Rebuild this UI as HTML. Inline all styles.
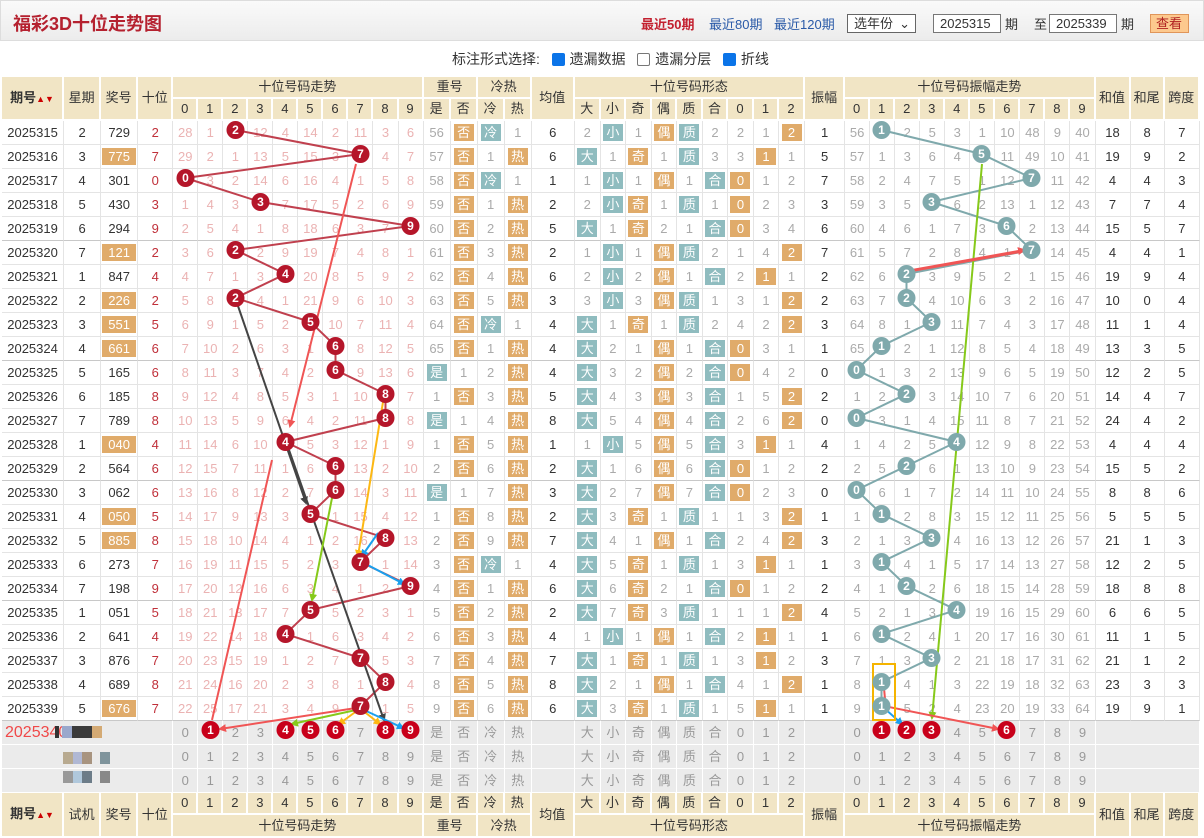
<!DOCTYPE html>
<html><head><meta charset="utf-8">
<style>
*{margin:0;padding:0;box-sizing:border-box}
body{width:1204px;height:835px;overflow:hidden;background:#fff;font-family:"Liberation Sans","Noto Sans CJK SC",sans-serif;font-size:13px;color:#333;position:relative}
.top{position:absolute;left:0;top:0;width:1204px;height:41px;background:linear-gradient(#fafafa,#ececec);border:1px solid #ddd}
.title{position:absolute;left:12px;top:9px;font-size:18px;font-weight:bold;color:#b5212f}
.ctl{position:absolute;top:13px;font-size:13px}
.inp{position:absolute;top:13px;height:19px;border:1px solid #777;background:#fff;font-size:13px;padding-left:6px;line-height:17px}
.opt{position:absolute;top:49px;left:452px;font-size:14px}
.cb{display:inline-block;width:13px;height:13px;border-radius:2px;vertical-align:-2px;margin:0 5px 0 0}
.cb.on{background:#0b74e8}
.cb.off{border:1px solid #777;background:#fff}
table{position:absolute;left:2px;top:77px;border-collapse:separate;border-spacing:0;table-layout:fixed;width:1198px}
td{border-right:1px solid #e4e4e4;border-bottom:1px solid #e4e4e4;text-align:center;padding:0;line-height:20px;white-space:nowrap;overflow:hidden}
tr.h td{background:#f1e5c5;border-color:#fff;border-width:0 2px 2px 0;font-size:13px}
tr.h1{height:22px}tr.h2{height:20px}
tr.d{height:24px}
tr.d td:nth-child(n+5):nth-child(-n+14){color:#ebb3b3}
tr.d td:nth-child(n+15):nth-child(-n+18){color:#aaa}
tr.d td:nth-child(n+20):nth-child(-n+28){color:#aaa}
tr.d td:nth-child(n+30):nth-child(-n+39){color:#aaa}
tr.d td:nth-child(4){color:#c0303a}
tr.s td{border-bottom-color:#c8c8c8}
i{font-style:normal;display:inline-block;width:20px;height:17px;line-height:17px;color:#fff!important}
i.o{background:#e0ab6a}i.t{background:#8fbcbf}
i.w{width:34px}
tr.p{height:24px}
tr.p td{background:#ebebeb;border-color:#fff;color:#999}
tr.f1{height:22px}tr.f2{height:23px}
tr.f1 td,tr.f2 td{background:#f1e5c5;border-color:#fff;border-width:0 2px 2px 0}
svg{position:absolute;left:0;top:0}
.bl{position:absolute;height:12px;width:10px}
</style></head><body>
<div class="top">
<div class="title">福彩3D十位走势图</div>
<span class="ctl" style="left:640px;color:#c3202f;font-weight:bold">最近50期</span>
<span class="ctl" style="left:708px;color:#2a5aa8">最近80期</span>
<span class="ctl" style="left:773px;color:#2a5aa8">最近120期</span>
<div class="inp" style="left:846px;width:69px;border-color:#666">选年份 <span style="position:absolute;right:5px;top:0">⌄</span></div>
<div class="inp" style="left:932px;width:68px">2025315</div>
<span class="ctl" style="left:1004px">期</span>
<span class="ctl" style="left:1033px">至</span>
<div class="inp" style="left:1048px;width:68px">2025339</div>
<span class="ctl" style="left:1120px">期</span>
<div class="inp" style="left:1149px;width:39px;background:#fdc98e;border-color:#e0955a;color:#b02020;padding-left:5px">查看</div>
</div>
<div class="opt">标注形式选择: &nbsp; <span class="cb on"></span>遗漏数据 &nbsp; <span class="cb off"></span>遗漏分层 &nbsp; <span class="cb on"></span>折线</div>
<table>
<colgroup><col style="width:62px"><col style="width:37px"><col style="width:37px"><col style="width:35px">
<col style="width:25px"><col style="width:25px"><col style="width:25px"><col style="width:25px"><col style="width:25px"><col style="width:25px"><col style="width:25px"><col style="width:25px"><col style="width:25px"><col style="width:25px">
<col style="width:27px"><col style="width:27px"><col style="width:27px"><col style="width:27px"><col style="width:43px">
<col style="width:26px"><col style="width:25px"><col style="width:26px"><col style="width:25px"><col style="width:26px"><col style="width:25px"><col style="width:26px"><col style="width:25px"><col style="width:26px">
<col style="width:40px">
<col style="width:25px"><col style="width:25px"><col style="width:25px"><col style="width:25px"><col style="width:25px"><col style="width:25px"><col style="width:25px"><col style="width:25px"><col style="width:25px"><col style="width:25px">
<col style="width:35px"><col style="width:34px"><col style="width:35px"></colgroup>
<tr class="h h1"><td rowspan="2"><b>期号</b><span style="color:#c00;font-size:9px">▲▼</span></td><td rowspan="2">星期</td><td rowspan="2">奖号</td><td rowspan="2">十位</td><td colspan="10">十位号码走势</td><td colspan="2">重号</td><td colspan="2">冷热</td><td rowspan="2">均值</td><td colspan="9">十位号码形态</td><td rowspan="2">振幅</td><td colspan="10">十位号码振幅走势</td><td rowspan="2">和值</td><td rowspan="2">和尾</td><td rowspan="2">跨度</td></tr>
<tr class="h h2"><td>0</td><td>1</td><td>2</td><td>3</td><td>4</td><td>5</td><td>6</td><td>7</td><td>8</td><td>9</td><td>是</td><td>否</td><td>冷</td><td>热</td><td>大</td><td>小</td><td>奇</td><td>偶</td><td>质</td><td>合</td><td>0</td><td>1</td><td>2</td><td>0</td><td>1</td><td>2</td><td>3</td><td>4</td><td>5</td><td>6</td><td>7</td><td>8</td><td>9</td></tr>
<tr class="d"><td>2025315</td><td>2</td><td>729</td><td>2</td><td>28</td><td>1</td><td></td><td>12</td><td>4</td><td>14</td><td>2</td><td>11</td><td>3</td><td>6</td><td>56</td><td><i class="o">否</i></td><td><i class="t">冷</i></td><td>1</td><td>6</td><td>2</td><td><i class="t">小</i></td><td>1</td><td><i class="o">偶</i></td><td><i class="t">质</i></td><td>2</td><td>2</td><td>1</td><td><i class="o">2</i></td><td>1</td><td>56</td><td></td><td>2</td><td>5</td><td>3</td><td>1</td><td>10</td><td>48</td><td>9</td><td>40</td><td>18</td><td>8</td><td>7</td></tr>
<tr class="d"><td>2025316</td><td>3</td><td><i class="o w">775</i></td><td>7</td><td>29</td><td>2</td><td>1</td><td>13</td><td>5</td><td>15</td><td>3</td><td></td><td>4</td><td>7</td><td>57</td><td><i class="o">否</i></td><td>1</td><td><i class="o">热</i></td><td>6</td><td><i class="t">大</i></td><td>1</td><td><i class="o">奇</i></td><td>1</td><td><i class="t">质</i></td><td>3</td><td>3</td><td><i class="o">1</i></td><td>1</td><td>5</td><td>57</td><td>1</td><td>3</td><td>6</td><td>4</td><td></td><td>11</td><td>49</td><td>10</td><td>41</td><td>19</td><td>9</td><td>2</td></tr>
<tr class="d"><td>2025317</td><td>4</td><td>301</td><td>0</td><td></td><td>3</td><td>2</td><td>14</td><td>6</td><td>16</td><td>4</td><td>1</td><td>5</td><td>8</td><td>58</td><td><i class="o">否</i></td><td><i class="t">冷</i></td><td>1</td><td>1</td><td>1</td><td><i class="t">小</i></td><td>1</td><td><i class="o">偶</i></td><td>1</td><td><i class="t">合</i></td><td><i class="o">0</i></td><td>1</td><td>2</td><td>7</td><td>58</td><td>2</td><td>4</td><td>7</td><td>5</td><td>1</td><td>12</td><td></td><td>11</td><td>42</td><td>4</td><td>4</td><td>3</td></tr>
<tr class="d"><td>2025318</td><td>5</td><td>430</td><td>3</td><td>1</td><td>4</td><td>3</td><td></td><td>7</td><td>17</td><td>5</td><td>2</td><td>6</td><td>9</td><td>59</td><td><i class="o">否</i></td><td>1</td><td><i class="o">热</i></td><td>2</td><td>2</td><td><i class="t">小</i></td><td><i class="o">奇</i></td><td>1</td><td><i class="t">质</i></td><td>1</td><td><i class="o">0</i></td><td>2</td><td>3</td><td>3</td><td>59</td><td>3</td><td>5</td><td></td><td>6</td><td>2</td><td>13</td><td>1</td><td>12</td><td>43</td><td>7</td><td>7</td><td>4</td></tr>
<tr class="d s"><td>2025319</td><td>6</td><td>294</td><td>9</td><td>2</td><td>5</td><td>4</td><td>1</td><td>8</td><td>18</td><td>6</td><td>3</td><td>7</td><td></td><td>60</td><td><i class="o">否</i></td><td>2</td><td><i class="o">热</i></td><td>5</td><td><i class="t">大</i></td><td>1</td><td><i class="o">奇</i></td><td>2</td><td>1</td><td><i class="t">合</i></td><td><i class="o">0</i></td><td>3</td><td>4</td><td>6</td><td>60</td><td>4</td><td>6</td><td>1</td><td>7</td><td>3</td><td></td><td>2</td><td>13</td><td>44</td><td>15</td><td>5</td><td>7</td></tr>
<tr class="d"><td>2025320</td><td>7</td><td><i class="o w">121</i></td><td>2</td><td>3</td><td>6</td><td></td><td>2</td><td>9</td><td>19</td><td>7</td><td>4</td><td>8</td><td>1</td><td>61</td><td><i class="o">否</i></td><td>3</td><td><i class="o">热</i></td><td>2</td><td>1</td><td><i class="t">小</i></td><td>1</td><td><i class="o">偶</i></td><td><i class="t">质</i></td><td>2</td><td>1</td><td>4</td><td><i class="o">2</i></td><td>7</td><td>61</td><td>5</td><td>7</td><td>2</td><td>8</td><td>4</td><td>1</td><td></td><td>14</td><td>45</td><td>4</td><td>4</td><td>1</td></tr>
<tr class="d"><td>2025321</td><td>1</td><td>847</td><td>4</td><td>4</td><td>7</td><td>1</td><td>3</td><td></td><td>20</td><td>8</td><td>5</td><td>9</td><td>2</td><td>62</td><td><i class="o">否</i></td><td>4</td><td><i class="o">热</i></td><td>6</td><td>2</td><td><i class="t">小</i></td><td>2</td><td><i class="o">偶</i></td><td>1</td><td><i class="t">合</i></td><td>2</td><td><i class="o">1</i></td><td>1</td><td>2</td><td>62</td><td>6</td><td></td><td>3</td><td>9</td><td>5</td><td>2</td><td>1</td><td>15</td><td>46</td><td>19</td><td>9</td><td>4</td></tr>
<tr class="d"><td>2025322</td><td>2</td><td><i class="o w">226</i></td><td>2</td><td>5</td><td>8</td><td></td><td>4</td><td>1</td><td>21</td><td>9</td><td>6</td><td>10</td><td>3</td><td>63</td><td><i class="o">否</i></td><td>5</td><td><i class="o">热</i></td><td>3</td><td>3</td><td><i class="t">小</i></td><td>3</td><td><i class="o">偶</i></td><td><i class="t">质</i></td><td>1</td><td>3</td><td>1</td><td><i class="o">2</i></td><td>2</td><td>63</td><td>7</td><td></td><td>4</td><td>10</td><td>6</td><td>3</td><td>2</td><td>16</td><td>47</td><td>10</td><td>0</td><td>4</td></tr>
<tr class="d"><td>2025323</td><td>3</td><td><i class="o w">551</i></td><td>5</td><td>6</td><td>9</td><td>1</td><td>5</td><td>2</td><td></td><td>10</td><td>7</td><td>11</td><td>4</td><td>64</td><td><i class="o">否</i></td><td><i class="t">冷</i></td><td>1</td><td>4</td><td><i class="t">大</i></td><td>1</td><td><i class="o">奇</i></td><td>1</td><td><i class="t">质</i></td><td>2</td><td>4</td><td>2</td><td><i class="o">2</i></td><td>3</td><td>64</td><td>8</td><td>1</td><td></td><td>11</td><td>7</td><td>4</td><td>3</td><td>17</td><td>48</td><td>11</td><td>1</td><td>4</td></tr>
<tr class="d s"><td>2025324</td><td>4</td><td><i class="o w">661</i></td><td>6</td><td>7</td><td>10</td><td>2</td><td>6</td><td>3</td><td>1</td><td></td><td>8</td><td>12</td><td>5</td><td>65</td><td><i class="o">否</i></td><td>1</td><td><i class="o">热</i></td><td>4</td><td><i class="t">大</i></td><td>2</td><td>1</td><td><i class="o">偶</i></td><td>1</td><td><i class="t">合</i></td><td><i class="o">0</i></td><td>3</td><td>1</td><td>1</td><td>65</td><td></td><td>2</td><td>1</td><td>12</td><td>8</td><td>5</td><td>4</td><td>18</td><td>49</td><td>13</td><td>3</td><td>5</td></tr>
<tr class="d"><td>2025325</td><td>5</td><td>165</td><td>6</td><td>8</td><td>11</td><td>3</td><td>7</td><td>4</td><td>2</td><td></td><td>9</td><td>13</td><td>6</td><td><i class="t">是</i></td><td>1</td><td>2</td><td><i class="o">热</i></td><td>4</td><td><i class="t">大</i></td><td>3</td><td>2</td><td><i class="o">偶</i></td><td>2</td><td><i class="t">合</i></td><td><i class="o">0</i></td><td>4</td><td>2</td><td>0</td><td></td><td>1</td><td>3</td><td>2</td><td>13</td><td>9</td><td>6</td><td>5</td><td>19</td><td>50</td><td>12</td><td>2</td><td>5</td></tr>
<tr class="d"><td>2025326</td><td>6</td><td>185</td><td>8</td><td>9</td><td>12</td><td>4</td><td>8</td><td>5</td><td>3</td><td>1</td><td>10</td><td></td><td>7</td><td>1</td><td><i class="o">否</i></td><td>3</td><td><i class="o">热</i></td><td>5</td><td><i class="t">大</i></td><td>4</td><td>3</td><td><i class="o">偶</i></td><td>3</td><td><i class="t">合</i></td><td>1</td><td>5</td><td><i class="o">2</i></td><td>2</td><td>1</td><td>2</td><td></td><td>3</td><td>14</td><td>10</td><td>7</td><td>6</td><td>20</td><td>51</td><td>14</td><td>4</td><td>7</td></tr>
<tr class="d"><td>2025327</td><td>7</td><td>789</td><td>8</td><td>10</td><td>13</td><td>5</td><td>9</td><td>6</td><td>4</td><td>2</td><td>11</td><td></td><td>8</td><td><i class="t">是</i></td><td>1</td><td>4</td><td><i class="o">热</i></td><td>8</td><td><i class="t">大</i></td><td>5</td><td>4</td><td><i class="o">偶</i></td><td>4</td><td><i class="t">合</i></td><td>2</td><td>6</td><td><i class="o">2</i></td><td>0</td><td></td><td>3</td><td>1</td><td>4</td><td>15</td><td>11</td><td>8</td><td>7</td><td>21</td><td>52</td><td>24</td><td>4</td><td>2</td></tr>
<tr class="d"><td>2025328</td><td>1</td><td><i class="o w">040</i></td><td>4</td><td>11</td><td>14</td><td>6</td><td>10</td><td></td><td>5</td><td>3</td><td>12</td><td>1</td><td>9</td><td>1</td><td><i class="o">否</i></td><td>5</td><td><i class="o">热</i></td><td>1</td><td>1</td><td><i class="t">小</i></td><td>5</td><td><i class="o">偶</i></td><td>5</td><td><i class="t">合</i></td><td>3</td><td><i class="o">1</i></td><td>1</td><td>4</td><td>1</td><td>4</td><td>2</td><td>5</td><td></td><td>12</td><td>9</td><td>8</td><td>22</td><td>53</td><td>4</td><td>4</td><td>4</td></tr>
<tr class="d s"><td>2025329</td><td>2</td><td>564</td><td>6</td><td>12</td><td>15</td><td>7</td><td>11</td><td>1</td><td>6</td><td></td><td>13</td><td>2</td><td>10</td><td>2</td><td><i class="o">否</i></td><td>6</td><td><i class="o">热</i></td><td>2</td><td><i class="t">大</i></td><td>1</td><td>6</td><td><i class="o">偶</i></td><td>6</td><td><i class="t">合</i></td><td><i class="o">0</i></td><td>1</td><td>2</td><td>2</td><td>2</td><td>5</td><td></td><td>6</td><td>1</td><td>13</td><td>10</td><td>9</td><td>23</td><td>54</td><td>15</td><td>5</td><td>2</td></tr>
<tr class="d"><td>2025330</td><td>3</td><td>062</td><td>6</td><td>13</td><td>16</td><td>8</td><td>12</td><td>2</td><td>7</td><td></td><td>14</td><td>3</td><td>11</td><td><i class="t">是</i></td><td>1</td><td>7</td><td><i class="o">热</i></td><td>3</td><td><i class="t">大</i></td><td>2</td><td>7</td><td><i class="o">偶</i></td><td>7</td><td><i class="t">合</i></td><td><i class="o">0</i></td><td>2</td><td>3</td><td>0</td><td></td><td>6</td><td>1</td><td>7</td><td>2</td><td>14</td><td>11</td><td>10</td><td>24</td><td>55</td><td>8</td><td>8</td><td>6</td></tr>
<tr class="d"><td>2025331</td><td>4</td><td><i class="o w">050</i></td><td>5</td><td>14</td><td>17</td><td>9</td><td>13</td><td>3</td><td></td><td>1</td><td>15</td><td>4</td><td>12</td><td>1</td><td><i class="o">否</i></td><td>8</td><td><i class="o">热</i></td><td>2</td><td><i class="t">大</i></td><td>3</td><td><i class="o">奇</i></td><td>1</td><td><i class="t">质</i></td><td>1</td><td>1</td><td>3</td><td><i class="o">2</i></td><td>1</td><td>1</td><td></td><td>2</td><td>8</td><td>3</td><td>15</td><td>12</td><td>11</td><td>25</td><td>56</td><td>5</td><td>5</td><td>5</td></tr>
<tr class="d"><td>2025332</td><td>5</td><td><i class="o w">885</i></td><td>8</td><td>15</td><td>18</td><td>10</td><td>14</td><td>4</td><td>1</td><td>2</td><td>16</td><td></td><td>13</td><td>2</td><td><i class="o">否</i></td><td>9</td><td><i class="o">热</i></td><td>7</td><td><i class="t">大</i></td><td>4</td><td>1</td><td><i class="o">偶</i></td><td>1</td><td><i class="t">合</i></td><td>2</td><td>4</td><td><i class="o">2</i></td><td>3</td><td>2</td><td>1</td><td>3</td><td></td><td>4</td><td>16</td><td>13</td><td>12</td><td>26</td><td>57</td><td>21</td><td>1</td><td>3</td></tr>
<tr class="d"><td>2025333</td><td>6</td><td>273</td><td>7</td><td>16</td><td>19</td><td>11</td><td>15</td><td>5</td><td>2</td><td>3</td><td></td><td>1</td><td>14</td><td>3</td><td><i class="o">否</i></td><td><i class="t">冷</i></td><td>1</td><td>4</td><td><i class="t">大</i></td><td>5</td><td><i class="o">奇</i></td><td>1</td><td><i class="t">质</i></td><td>1</td><td>3</td><td><i class="o">1</i></td><td>1</td><td>1</td><td>3</td><td></td><td>4</td><td>1</td><td>5</td><td>17</td><td>14</td><td>13</td><td>27</td><td>58</td><td>12</td><td>2</td><td>5</td></tr>
<tr class="d s"><td>2025334</td><td>7</td><td>198</td><td>9</td><td>17</td><td>20</td><td>12</td><td>16</td><td>6</td><td>3</td><td>4</td><td>1</td><td>2</td><td></td><td>4</td><td><i class="o">否</i></td><td>1</td><td><i class="o">热</i></td><td>6</td><td><i class="t">大</i></td><td>6</td><td><i class="o">奇</i></td><td>2</td><td>1</td><td><i class="t">合</i></td><td><i class="o">0</i></td><td>1</td><td>2</td><td>2</td><td>4</td><td>1</td><td></td><td>2</td><td>6</td><td>18</td><td>15</td><td>14</td><td>28</td><td>59</td><td>18</td><td>8</td><td>8</td></tr>
<tr class="d"><td>2025335</td><td>1</td><td>051</td><td>5</td><td>18</td><td>21</td><td>13</td><td>17</td><td>7</td><td></td><td>5</td><td>2</td><td>3</td><td>1</td><td>5</td><td><i class="o">否</i></td><td>2</td><td><i class="o">热</i></td><td>2</td><td><i class="t">大</i></td><td>7</td><td><i class="o">奇</i></td><td>3</td><td><i class="t">质</i></td><td>1</td><td>1</td><td>1</td><td><i class="o">2</i></td><td>4</td><td>5</td><td>2</td><td>1</td><td>3</td><td></td><td>19</td><td>16</td><td>15</td><td>29</td><td>60</td><td>6</td><td>6</td><td>5</td></tr>
<tr class="d"><td>2025336</td><td>2</td><td>641</td><td>4</td><td>19</td><td>22</td><td>14</td><td>18</td><td></td><td>1</td><td>6</td><td>3</td><td>4</td><td>2</td><td>6</td><td><i class="o">否</i></td><td>3</td><td><i class="o">热</i></td><td>4</td><td>1</td><td><i class="t">小</i></td><td>1</td><td><i class="o">偶</i></td><td>1</td><td><i class="t">合</i></td><td>2</td><td><i class="o">1</i></td><td>1</td><td>1</td><td>6</td><td></td><td>2</td><td>4</td><td>1</td><td>20</td><td>17</td><td>16</td><td>30</td><td>61</td><td>11</td><td>1</td><td>5</td></tr>
<tr class="d"><td>2025337</td><td>3</td><td>876</td><td>7</td><td>20</td><td>23</td><td>15</td><td>19</td><td>1</td><td>2</td><td>7</td><td></td><td>5</td><td>3</td><td>7</td><td><i class="o">否</i></td><td>4</td><td><i class="o">热</i></td><td>7</td><td><i class="t">大</i></td><td>1</td><td><i class="o">奇</i></td><td>1</td><td><i class="t">质</i></td><td>1</td><td>3</td><td><i class="o">1</i></td><td>2</td><td>3</td><td>7</td><td>1</td><td>3</td><td></td><td>2</td><td>21</td><td>18</td><td>17</td><td>31</td><td>62</td><td>21</td><td>1</td><td>2</td></tr>
<tr class="d"><td>2025338</td><td>4</td><td>689</td><td>8</td><td>21</td><td>24</td><td>16</td><td>20</td><td>2</td><td>3</td><td>8</td><td>1</td><td></td><td>4</td><td>8</td><td><i class="o">否</i></td><td>5</td><td><i class="o">热</i></td><td>8</td><td><i class="t">大</i></td><td>2</td><td>1</td><td><i class="o">偶</i></td><td>1</td><td><i class="t">合</i></td><td>4</td><td>1</td><td><i class="o">2</i></td><td>1</td><td>8</td><td></td><td>4</td><td>1</td><td>3</td><td>22</td><td>19</td><td>18</td><td>32</td><td>63</td><td>23</td><td>3</td><td>3</td></tr>
<tr class="d s"><td>2025339</td><td>5</td><td><i class="o w">676</i></td><td>7</td><td>22</td><td>25</td><td>17</td><td>21</td><td>3</td><td>4</td><td>9</td><td></td><td>1</td><td>5</td><td>9</td><td><i class="o">否</i></td><td>6</td><td><i class="o">热</i></td><td>6</td><td><i class="t">大</i></td><td>3</td><td><i class="o">奇</i></td><td>1</td><td><i class="t">质</i></td><td>1</td><td>5</td><td><i class="o">1</i></td><td>1</td><td>1</td><td>9</td><td></td><td>5</td><td>2</td><td>4</td><td>23</td><td>20</td><td>19</td><td>33</td><td>64</td><td>19</td><td>9</td><td>1</td></tr>
<tr class="p"><td colspan="4" style="text-align:left;color:#f04848;font-size:16px;padding-left:3px">2025340</td><td>0</td><td></td><td>2</td><td>3</td><td></td><td></td><td></td><td>7</td><td></td><td></td><td>是</td><td>否</td><td>冷</td><td>热</td><td></td><td>大</td><td>小</td><td>奇</td><td>偶</td><td>质</td><td>合</td><td>0</td><td>1</td><td>2</td><td></td><td>0</td><td></td><td></td><td></td><td>4</td><td>5</td><td></td><td>7</td><td>8</td><td>9</td><td colspan="3"></td></tr>
<tr class="p"><td colspan="4"></td><td>0</td><td>1</td><td>2</td><td>3</td><td>4</td><td>5</td><td>6</td><td>7</td><td>8</td><td>9</td><td>是</td><td>否</td><td>冷</td><td>热</td><td></td><td>大</td><td>小</td><td>奇</td><td>偶</td><td>质</td><td>合</td><td>0</td><td>1</td><td>2</td><td></td><td>0</td><td>1</td><td>2</td><td>3</td><td>4</td><td>5</td><td>6</td><td>7</td><td>8</td><td>9</td><td colspan="3"></td></tr>
<tr class="p"><td colspan="4"></td><td>0</td><td>1</td><td>2</td><td>3</td><td>4</td><td>5</td><td>6</td><td>7</td><td>8</td><td>9</td><td>是</td><td>否</td><td>冷</td><td>热</td><td></td><td>大</td><td>小</td><td>奇</td><td>偶</td><td>质</td><td>合</td><td>0</td><td>1</td><td>2</td><td></td><td>0</td><td>1</td><td>2</td><td>3</td><td>4</td><td>5</td><td>6</td><td>7</td><td>8</td><td>9</td><td colspan="3"></td></tr>
<tr class="f1"><td rowspan="2"><b>期号</b><span style="color:#c00;font-size:9px">▲▼</span></td><td rowspan="2">试机</td><td rowspan="2">奖号</td><td rowspan="2">十位</td><td>0</td><td>1</td><td>2</td><td>3</td><td>4</td><td>5</td><td>6</td><td>7</td><td>8</td><td>9</td><td>是</td><td>否</td><td>冷</td><td>热</td><td rowspan="2">均值</td><td>大</td><td>小</td><td>奇</td><td>偶</td><td>质</td><td>合</td><td>0</td><td>1</td><td>2</td><td rowspan="2">振幅</td><td>0</td><td>1</td><td>2</td><td>3</td><td>4</td><td>5</td><td>6</td><td>7</td><td>8</td><td>9</td><td rowspan="2">和值</td><td rowspan="2">和尾</td><td rowspan="2">跨度</td></tr>
<tr class="f2"><td colspan="10">十位号码走势</td><td colspan="2">重号</td><td colspan="2">冷热</td><td colspan="9">十位号码形态</td><td colspan="10">十位号码振幅走势</td></tr>
</table>
<div class="bl" style="left:55px;top:726px;background:#333;width:4px"></div><div class="bl" style="left:62px;top:726px;background:#9aa8cc"></div><div class="bl" style="left:72px;top:726px;background:#3a3a3a;width:20px"></div><div class="bl" style="left:92px;top:726px;background:#d4aa74"></div>
<div class="bl" style="left:63px;top:752px;background:#b8aa90"></div><div class="bl" style="left:73px;top:752px;background:#b0b8d4"></div><div class="bl" style="left:82px;top:752px;background:#a89480"></div><div class="bl" style="left:100px;top:752px;background:#7f949c"></div>
<div class="bl" style="left:63px;top:771px;background:#999"></div><div class="bl" style="left:73px;top:771px;background:#b0c8dc"></div><div class="bl" style="left:82px;top:771px;background:#6c7c88"></div><div class="bl" style="left:100px;top:771px;background:#888"></div>
<svg width="1204" height="835" viewBox="0 0 1204 835">
<defs>
<marker id="ar" markerWidth="8" markerHeight="8" refX="6" refY="4" orient="auto" markerUnits="userSpaceOnUse"><path d="M0,0 L8,4 L0,8 z" fill="#f05555"/></marker>
<marker id="ag" markerWidth="8" markerHeight="8" refX="6" refY="4" orient="auto" markerUnits="userSpaceOnUse"><path d="M0,0 L8,4 L0,8 z" fill="#86c91a"/></marker>
<marker id="ay" markerWidth="8" markerHeight="8" refX="6" refY="4" orient="auto" markerUnits="userSpaceOnUse"><path d="M0,0 L8,4 L0,8 z" fill="#fdb813"/></marker>
<marker id="ab" markerWidth="8" markerHeight="8" refX="6" refY="4" orient="auto" markerUnits="userSpaceOnUse"><path d="M0,0 L8,4 L0,8 z" fill="#1aa0ee"/></marker>
<marker id="ak" markerWidth="8" markerHeight="8" refX="6" refY="4" orient="auto" markerUnits="userSpaceOnUse"><path d="M0,0 L8,4 L0,8 z" fill="#444"/></marker>
</defs>
<polyline fill="none" stroke="#c0404e" stroke-width="2" points="235.5,130 360.5,154 185.5,178 260.5,202 410.5,226 235.5,250 285.5,274 235.5,298 310.5,322 335.5,346 335.5,370 385.5,394 385.5,418 285.5,442 335.5,466 335.5,490 310.5,514 385.5,538 360.5,562 410.5,586 310.5,610 285.5,634 360.5,658 385.5,682 360.5,706"/>
<polyline fill="none" stroke="#7fa9ac" stroke-width="2" points="881.5,130 981.5,154 1031.5,178 931.5,202 1006.5,226 1031.5,250 906.5,274 906.5,298 931.5,322 881.5,346 856.5,370 906.5,394 856.5,418 956.5,442 906.5,466 856.5,490 881.5,514 931.5,538 881.5,562 906.5,586 956.5,610 881.5,634 931.5,658 881.5,682 881.5,706"/>
<g stroke-width="2" fill="none">
<line x1="356" y1="164" x2="290" y2="426" stroke="#f05555" marker-end="url(#ar)"/>
<line x1="238" y1="306" x2="306" y2="503" stroke="#444" marker-end="url(#ak)"/>
<line x1="289" y1="450" x2="384" y2="720" stroke="#444" marker-end="url(#ak)"/>
<line x1="272" y1="460" x2="212" y2="720" stroke="#f05555"/>
<line x1="383" y1="402" x2="358" y2="556" stroke="#fdb813" marker-end="url(#ay)"/>
<line x1="332" y1="498" x2="312" y2="600" stroke="#86c91a" marker-end="url(#ag)"/>
<line x1="378" y1="533" x2="362" y2="556" stroke="#1aa0ee" marker-end="url(#ab)"/>
<line x1="362" y1="562" x2="404" y2="584" stroke="#1aa0ee" marker-end="url(#ab)"/>
<line x1="356" y1="708" x2="220" y2="729" stroke="#f05555" marker-end="url(#ar)"/>
<line x1="356" y1="710" x2="292" y2="724" stroke="#86c91a" marker-end="url(#ag)"/>
<line x1="358" y1="710" x2="339" y2="724" stroke="#fdb813" marker-end="url(#ay)"/>
<line x1="362" y1="710" x2="380" y2="724" stroke="#fdb813" marker-end="url(#ay)"/>
<line x1="364" y1="710" x2="403" y2="728" stroke="#1aa0ee" marker-end="url(#ab)"/>
<line x1="982" y1="164" x2="932" y2="718" stroke="#86c91a" marker-end="url(#ag)"/>
<line x1="912" y1="270" x2="1024" y2="250" stroke="#f05555" marker-end="url(#ar)"/>
<line x1="1020" y1="252" x2="906" y2="272" stroke="#f05555" marker-end="url(#ar)"/>
<line x1="884" y1="688" x2="886" y2="710" stroke="#f05555" marker-end="url(#ar)"/>
<line x1="884" y1="708" x2="902" y2="724" stroke="#1aa0ee" marker-end="url(#ab)"/>
<line x1="884" y1="706" x2="998" y2="729" stroke="#f05555" marker-end="url(#ar)"/>
</g>
<rect x="873" y="664" width="22" height="56" fill="none" stroke="#f5b400" stroke-width="2"/>
<g fill="#b5162a" font-family="Liberation Sans,sans-serif" font-weight="bold" font-size="12" text-anchor="middle">
<g id="hits">
<circle cx="235.5" cy="130" r="9"/><circle cx="360.5" cy="154" r="9"/><circle cx="185.5" cy="178" r="9"/><circle cx="260.5" cy="202" r="9"/><circle cx="410.5" cy="226" r="9"/><circle cx="235.5" cy="250" r="9"/><circle cx="285.5" cy="274" r="9"/><circle cx="235.5" cy="298" r="9"/><circle cx="310.5" cy="322" r="9"/><circle cx="335.5" cy="346" r="9"/><circle cx="335.5" cy="370" r="9"/><circle cx="385.5" cy="394" r="9"/><circle cx="385.5" cy="418" r="9"/><circle cx="285.5" cy="442" r="9"/><circle cx="335.5" cy="466" r="9"/><circle cx="335.5" cy="490" r="9"/><circle cx="310.5" cy="514" r="9"/><circle cx="385.5" cy="538" r="9"/><circle cx="360.5" cy="562" r="9"/><circle cx="410.5" cy="586" r="9"/><circle cx="310.5" cy="610" r="9"/><circle cx="285.5" cy="634" r="9"/><circle cx="360.5" cy="658" r="9"/><circle cx="385.5" cy="682" r="9"/><circle cx="360.5" cy="706" r="9"/>
</g>
<g fill="#c8001a"><circle cx="210.5" cy="730" r="9"/><circle cx="285.5" cy="730" r="9"/><circle cx="310.5" cy="730" r="9"/><circle cx="335.5" cy="730" r="9"/><circle cx="385.5" cy="730" r="9"/><circle cx="410.5" cy="730" r="9"/><circle cx="881.5" cy="730" r="9"/><circle cx="906.5" cy="730" r="9"/><circle cx="931.5" cy="730" r="9"/><circle cx="1006.5" cy="730" r="9"/></g>
<g fill="#7fa9ac"><circle cx="881.5" cy="130" r="9"/><circle cx="981.5" cy="154" r="9"/><circle cx="1031.5" cy="178" r="9"/><circle cx="931.5" cy="202" r="9"/><circle cx="1006.5" cy="226" r="9"/><circle cx="1031.5" cy="250" r="9"/><circle cx="906.5" cy="274" r="9"/><circle cx="906.5" cy="298" r="9"/><circle cx="931.5" cy="322" r="9"/><circle cx="881.5" cy="346" r="9"/><circle cx="856.5" cy="370" r="9"/><circle cx="906.5" cy="394" r="9"/><circle cx="856.5" cy="418" r="9"/><circle cx="956.5" cy="442" r="9"/><circle cx="906.5" cy="466" r="9"/><circle cx="856.5" cy="490" r="9"/><circle cx="881.5" cy="514" r="9"/><circle cx="931.5" cy="538" r="9"/><circle cx="881.5" cy="562" r="9"/><circle cx="906.5" cy="586" r="9"/><circle cx="956.5" cy="610" r="9"/><circle cx="881.5" cy="634" r="9"/><circle cx="931.5" cy="658" r="9"/><circle cx="881.5" cy="682" r="9"/><circle cx="881.5" cy="706" r="9"/></g>
<g fill="#fff">
<text x="235.5" y="134">2</text><text x="360.5" y="158">7</text><text x="185.5" y="182">0</text><text x="260.5" y="206">3</text><text x="410.5" y="230">9</text><text x="235.5" y="254">2</text><text x="285.5" y="278">4</text><text x="235.5" y="302">2</text><text x="310.5" y="326">5</text><text x="335.5" y="350">6</text><text x="335.5" y="374">6</text><text x="385.5" y="398">8</text><text x="385.5" y="422">8</text><text x="285.5" y="446">4</text><text x="335.5" y="470">6</text><text x="335.5" y="494">6</text><text x="310.5" y="518">5</text><text x="385.5" y="542">8</text><text x="360.5" y="566">7</text><text x="410.5" y="590">9</text><text x="310.5" y="614">5</text><text x="285.5" y="638">4</text><text x="360.5" y="662">7</text><text x="385.5" y="686">8</text><text x="360.5" y="710">7</text>
<text x="210.5" y="734">1</text><text x="285.5" y="734">4</text><text x="310.5" y="734">5</text><text x="335.5" y="734">6</text><text x="385.5" y="734">8</text><text x="410.5" y="734">9</text><text x="881.5" y="734">1</text><text x="906.5" y="734">2</text><text x="931.5" y="734">3</text><text x="1006.5" y="734">6</text>
<text x="881.5" y="134">1</text><text x="981.5" y="158">5</text><text x="1031.5" y="182">7</text><text x="931.5" y="206">3</text><text x="1006.5" y="230">6</text><text x="1031.5" y="254">7</text><text x="906.5" y="278">2</text><text x="906.5" y="302">2</text><text x="931.5" y="326">3</text><text x="881.5" y="350">1</text><text x="856.5" y="374">0</text><text x="906.5" y="398">2</text><text x="856.5" y="422">0</text><text x="956.5" y="446">4</text><text x="906.5" y="470">2</text><text x="856.5" y="494">0</text><text x="881.5" y="518">1</text><text x="931.5" y="542">3</text><text x="881.5" y="566">1</text><text x="906.5" y="590">2</text><text x="956.5" y="614">4</text><text x="881.5" y="638">1</text><text x="931.5" y="662">3</text><text x="881.5" y="686">1</text><text x="881.5" y="710">1</text>
</g>
</g>
</svg>
</body></html>
